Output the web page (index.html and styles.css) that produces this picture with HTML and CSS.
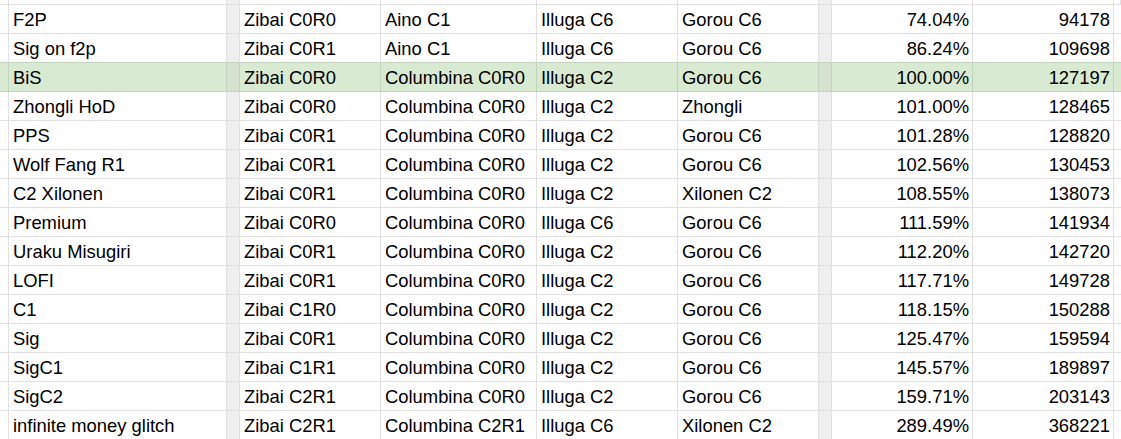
FILE: index.html
```html
<!DOCTYPE html>
<html>
<head>
<meta charset="utf-8">
<link rel="stylesheet" href="styles.css">
</head>
<body>
<div class="sheet">
  <div class="row top"><div class="c"></div><div class="c"></div><div class="c g"></div><div class="c"></div><div class="c"></div><div class="c"></div><div class="c"></div><div class="c g"></div><div class="c"></div><div class="c"></div><div class="c"></div></div>
  <div class="row"><div class="c"></div><div class="c">F2P</div><div class="c g"></div><div class="c">Zibai C0R0</div><div class="c">Aino C1</div><div class="c">Illuga C6</div><div class="c">Gorou C6</div><div class="c g"></div><div class="c n">74.04%</div><div class="c n">94178</div><div class="c"></div></div>
  <div class="row pre"><div class="c"></div><div class="c">Sig on f2p</div><div class="c g"></div><div class="c">Zibai C0R1</div><div class="c">Aino C1</div><div class="c">Illuga C6</div><div class="c">Gorou C6</div><div class="c g"></div><div class="c n">86.24%</div><div class="c n">109698</div><div class="c"></div></div>
  <div class="row hl"><div class="c"></div><div class="c">BiS</div><div class="c g"></div><div class="c">Zibai C0R0</div><div class="c">Columbina C0R0</div><div class="c">Illuga C2</div><div class="c">Gorou C6</div><div class="c g"></div><div class="c n">100.00%</div><div class="c n">127197</div><div class="c"></div></div>
  <div class="row"><div class="c"></div><div class="c">Zhongli HoD</div><div class="c g"></div><div class="c">Zibai C0R0</div><div class="c">Columbina C0R0</div><div class="c">Illuga C2</div><div class="c">Zhongli</div><div class="c g"></div><div class="c n">101.00%</div><div class="c n">128465</div><div class="c"></div></div>
  <div class="row"><div class="c"></div><div class="c">PPS</div><div class="c g"></div><div class="c">Zibai C0R1</div><div class="c">Columbina C0R0</div><div class="c">Illuga C2</div><div class="c">Gorou C6</div><div class="c g"></div><div class="c n">101.28%</div><div class="c n">128820</div><div class="c"></div></div>
  <div class="row"><div class="c"></div><div class="c">Wolf Fang R1</div><div class="c g"></div><div class="c">Zibai C0R1</div><div class="c">Columbina C0R0</div><div class="c">Illuga C2</div><div class="c">Gorou C6</div><div class="c g"></div><div class="c n">102.56%</div><div class="c n">130453</div><div class="c"></div></div>
  <div class="row"><div class="c"></div><div class="c">C2 Xilonen</div><div class="c g"></div><div class="c">Zibai C0R1</div><div class="c">Columbina C0R0</div><div class="c">Illuga C2</div><div class="c">Xilonen C2</div><div class="c g"></div><div class="c n">108.55%</div><div class="c n">138073</div><div class="c"></div></div>
  <div class="row"><div class="c"></div><div class="c">Premium</div><div class="c g"></div><div class="c">Zibai C0R0</div><div class="c">Columbina C0R0</div><div class="c">Illuga C6</div><div class="c">Gorou C6</div><div class="c g"></div><div class="c n">111.59%</div><div class="c n">141934</div><div class="c"></div></div>
  <div class="row"><div class="c"></div><div class="c">Uraku Misugiri</div><div class="c g"></div><div class="c">Zibai C0R1</div><div class="c">Columbina C0R0</div><div class="c">Illuga C2</div><div class="c">Gorou C6</div><div class="c g"></div><div class="c n">112.20%</div><div class="c n">142720</div><div class="c"></div></div>
  <div class="row"><div class="c"></div><div class="c">LOFI</div><div class="c g"></div><div class="c">Zibai C0R1</div><div class="c">Columbina C0R0</div><div class="c">Illuga C2</div><div class="c">Gorou C6</div><div class="c g"></div><div class="c n">117.71%</div><div class="c n">149728</div><div class="c"></div></div>
  <div class="row"><div class="c"></div><div class="c">C1</div><div class="c g"></div><div class="c">Zibai C1R0</div><div class="c">Columbina C0R0</div><div class="c">Illuga C2</div><div class="c">Gorou C6</div><div class="c g"></div><div class="c n">118.15%</div><div class="c n">150288</div><div class="c"></div></div>
  <div class="row"><div class="c"></div><div class="c">Sig</div><div class="c g"></div><div class="c">Zibai C0R1</div><div class="c">Columbina C0R0</div><div class="c">Illuga C2</div><div class="c">Gorou C6</div><div class="c g"></div><div class="c n">125.47%</div><div class="c n">159594</div><div class="c"></div></div>
  <div class="row"><div class="c"></div><div class="c">SigC1</div><div class="c g"></div><div class="c">Zibai C1R1</div><div class="c">Columbina C0R0</div><div class="c">Illuga C2</div><div class="c">Gorou C6</div><div class="c g"></div><div class="c n">145.57%</div><div class="c n">189897</div><div class="c"></div></div>
  <div class="row"><div class="c"></div><div class="c">SigC2</div><div class="c g"></div><div class="c">Zibai C2R1</div><div class="c">Columbina C0R0</div><div class="c">Illuga C2</div><div class="c">Gorou C6</div><div class="c g"></div><div class="c n">159.71%</div><div class="c n">203143</div><div class="c"></div></div>
  <div class="row"><div class="c"></div><div class="c">infinite money glitch</div><div class="c g"></div><div class="c">Zibai C2R1</div><div class="c">Columbina C2R1</div><div class="c">Illuga C6</div><div class="c">Xilonen C2</div><div class="c g"></div><div class="c n">289.49%</div><div class="c n">368221</div><div class="c"></div></div>
</div>
</body>
</html>
```

FILE: styles.css
```css
html, body {
  margin: 0;
  padding: 0;
  background: #ffffff;
}

.sheet {
  width: 1121px;
  height: 439px;
  overflow: hidden;
  font-family: "Liberation Sans", Arial, sans-serif;
  font-size: 18.4px;
  color: #000000;
}

.row {
  display: grid;
  grid-template-columns: 9px 218px 13px 141px 156px 141px 141px 13px 141px 141px 1fr;
  height: 29px;
}

.row.top {
  height: 5px;
}

.c {
  box-sizing: border-box;
  border-right: 1px solid #e1e1e1;
  border-bottom: 1px solid #e1e1e1;
  padding: 2px 3px 0 4px;
  line-height: 26px;
  white-space: nowrap;
  overflow: hidden;
}

.top .c {
  padding: 0;
}

.c.g {
  background: #efefef;
  padding: 0;
}

.c.n {
  text-align: right;
}

.row.pre .c {
  border-bottom-color: #c4d3bd;
}

.row.hl .c {
  background: #d9ead3;
  border-bottom-color: #c4d3bd;
  border-right-color: #c4d3bd;
}

.row.hl .c.g {
  background: #d5e3cf;
}
```
